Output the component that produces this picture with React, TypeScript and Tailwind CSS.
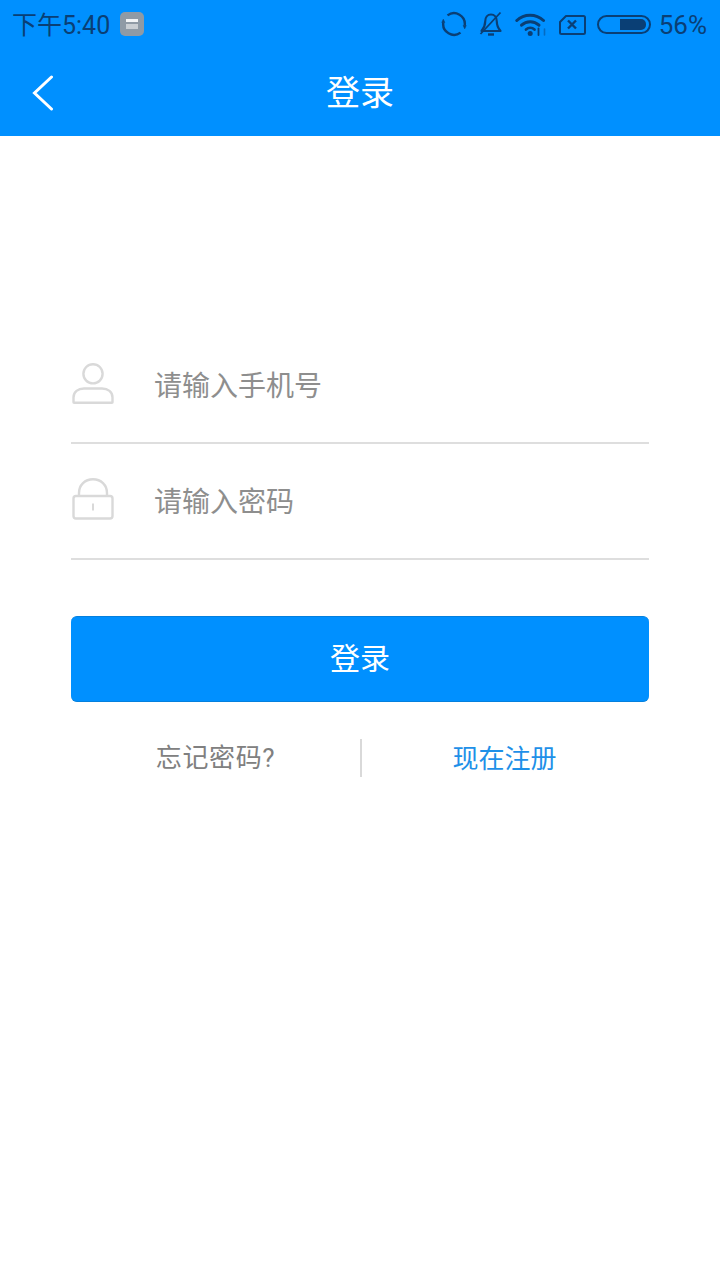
import React from 'react';

const FONT = "font-['Roboto','Noto_Sans_CJK_SC',sans-serif]";

const StatusIcons: React.FC = () => (
  <div className="flex items-center text-[#0a3f75]">
    {/* sync */}
    <svg width="26" height="26" viewBox="0 0 26 26" fill="none" stroke="currentColor" strokeWidth="2.400">
      <path d="M6.500 4.400A10.800 10.800 0 0 1 23.700 14.500" />
      <path d="M19.500 21.600A10.800 10.800 0 0 1 2.300 11.500" />
      <path d="M0.800 11.500h3L2.300 8.200ZM22.200 14.500h3l-1.500 3.300Z" fill="currentColor" strokeWidth="0.600" />
    </svg>
    {/* bell off */}
    <svg width="26" height="26" viewBox="0 0 26 26" fill="none" stroke="currentColor" strokeWidth="2.200" className="ml-[11px]">
      <path d="M18.800 10.500c0-4-2.400-7-5.800-7s-5.800 3-5.800 7c0 4.800-1.600 7-3.700 9.500h19c-2.100-2.500-3.700-4.700-3.700-9.500Z" strokeLinejoin="round" />
      <path d="M10 23.500h6" strokeWidth="2.400" />
      <path d="M2.500 23 22.500 1.500" strokeWidth="1.800" />
    </svg>
    {/* wifi */}
    <svg width="33" height="26" viewBox="0 0 33 26" fill="none" stroke="currentColor" strokeLinecap="round" className="ml-[11px]">
      <path d="M1.800 9.500C9 2.500 21 2.500 28.500 9.500" strokeWidth="3" />
      <path d="M6.500 14.200c5-4.700 12.500-4.700 17.500 0" strokeWidth="3" />
      <path d="M11 18.500c2.500-2.200 6-2.200 8.500 0" strokeWidth="2.800" />
      <circle cx="15.200" cy="22.500" r="2.500" fill="currentColor" stroke="none" />
      <path d="M23.500 17.500v6.500" strokeWidth="1.800" />
      <path d="M29.500 18v6" strokeWidth="1.600" strokeOpacity="0.45" />
    </svg>
    {/* sim with x */}
    <svg width="28" height="22" viewBox="0 0 28 22" fill="none" stroke="currentColor" strokeWidth="2" className="ml-[10px] mt-px">
      <path d="M8 2h17.500a1.500 1.500 0 0 1 1.500 1.500v15a1.500 1.500 0 0 1-1.500 1.500h-22A1.500 1.500 0 0 1 2 18.500V8Z" strokeLinejoin="round" />
      <path d="m10 6.500 8 8M18 6.500l-8 8" strokeWidth="2.400" />
    </svg>
    {/* battery */}
    <div className="ml-[11px] flex h-[19px] w-[54px] items-center justify-end rounded-full border-2 border-current pr-[3px]">
      <div className="h-[11px] w-[26px] rounded-r-[5px] bg-[#0a3f75]" />
    </div>
    <span className="ml-[8px] pt-[1px] text-[26px] leading-none">56%</span>
  </div>
);

const UserIcon: React.FC = () => (
  <svg width="42" height="41" viewBox="0 0 42 41" fill="none" stroke="#d9d9d9" strokeWidth="2.400">
    <circle cx="21" cy="10.800" r="9.600" />
    <path d="M12 25.500h18c6 0 10.500 3.500 10.500 9v4.700a.6.600 0 0 1-.6.600H2.100a.6.600 0 0 1-.6-.6v-4.700c0-5.500 4.500-9 10.500-9Z" strokeLinejoin="round" />
  </svg>
);

const LockIcon: React.FC = () => (
  <svg width="42" height="42" viewBox="0 0 42 42" fill="none" stroke="#d9d9d9" strokeWidth="2.400">
    <path d="M7 18v-3C7 7 13 1.300 21 1.300S35 7 35 15v3" />
    <rect x="1.500" y="18" width="39" height="22.500" rx="2.500" />
    <path d="M21 25.500v7" strokeWidth="2" />
  </svg>
);

const App: React.FC = () => {
  return (
    <div className={`min-h-[1280px] w-[720px] bg-white ${FONT}`}>
      {/* Header */}
      <div className="bg-[#0090ff]">
        <div className="flex h-[48px] items-center justify-between pl-[12px] pr-[13px]">
          <div className="flex items-center">
            <span className="pt-[2px] text-[25px] leading-none text-[#0a3f75]">下午5:40</span>
            <div className="ml-[10px] flex h-[24px] w-[24px] flex-col items-center justify-center gap-[2px] rounded-[5px] bg-[#8f9aa5]">
              <div className="h-[3px] w-[12px] bg-[#f2f4f6]" />
              <div className="h-[5px] w-[12px] bg-[#c9ced3]" />
            </div>
          </div>
          <StatusIcons />
        </div>
        <div className="relative flex h-[88px] items-center justify-center">
          <svg width="22" height="36" viewBox="0 0 22 36" fill="none" stroke="white" strokeWidth="3" strokeLinecap="round" className="absolute left-[32px] top-[27px]">
            <path d="M19.500 2 2.500 18l17 16" />
          </svg>
          <span className="pt-[2px] text-[34px] leading-none text-white">登录</span>
        </div>
      </div>

      {/* Form */}
      <div className="flex flex-col px-[71px] pt-[192px]">
        <div className="flex h-[116px] items-center border-b-2 border-[#dedede]">
          <div className="mb-[4px] flex w-[83px] pl-px"><UserIcon /></div>
          <span className="pt-[4px] text-[28px] leading-none text-[#8e8e8e]">请输入手机号</span>
        </div>
        <div className="flex h-[116px] items-center border-b-2 border-[#dedede]">
          <div className="mb-[5px] flex w-[83px] pl-px"><LockIcon /></div>
          <span className="pt-[4px] text-[28px] leading-none text-[#8e8e8e]">请输入密码</span>
        </div>

        <button className="mt-[56px] flex h-[86px] items-center justify-center rounded-[6px] border-y border-[#0580dd] bg-[#0090ff] text-[30px] leading-none text-white">
          登录
        </button>

        <div className="mt-[37px] flex h-[38px] items-center">
          <span className="w-[289px] text-center text-[26px] leading-none tracking-[0.6px] text-[#808080]">忘记密码?</span>
          <div className="h-full w-[2px] bg-[#d9d9d9]" />
          <span className="flex-1 pr-[2px] pt-[2px] text-center text-[26px] leading-none text-[#1e90e8]">现在注册</span>
        </div>
      </div>
    </div>
  );
};

export default App;
